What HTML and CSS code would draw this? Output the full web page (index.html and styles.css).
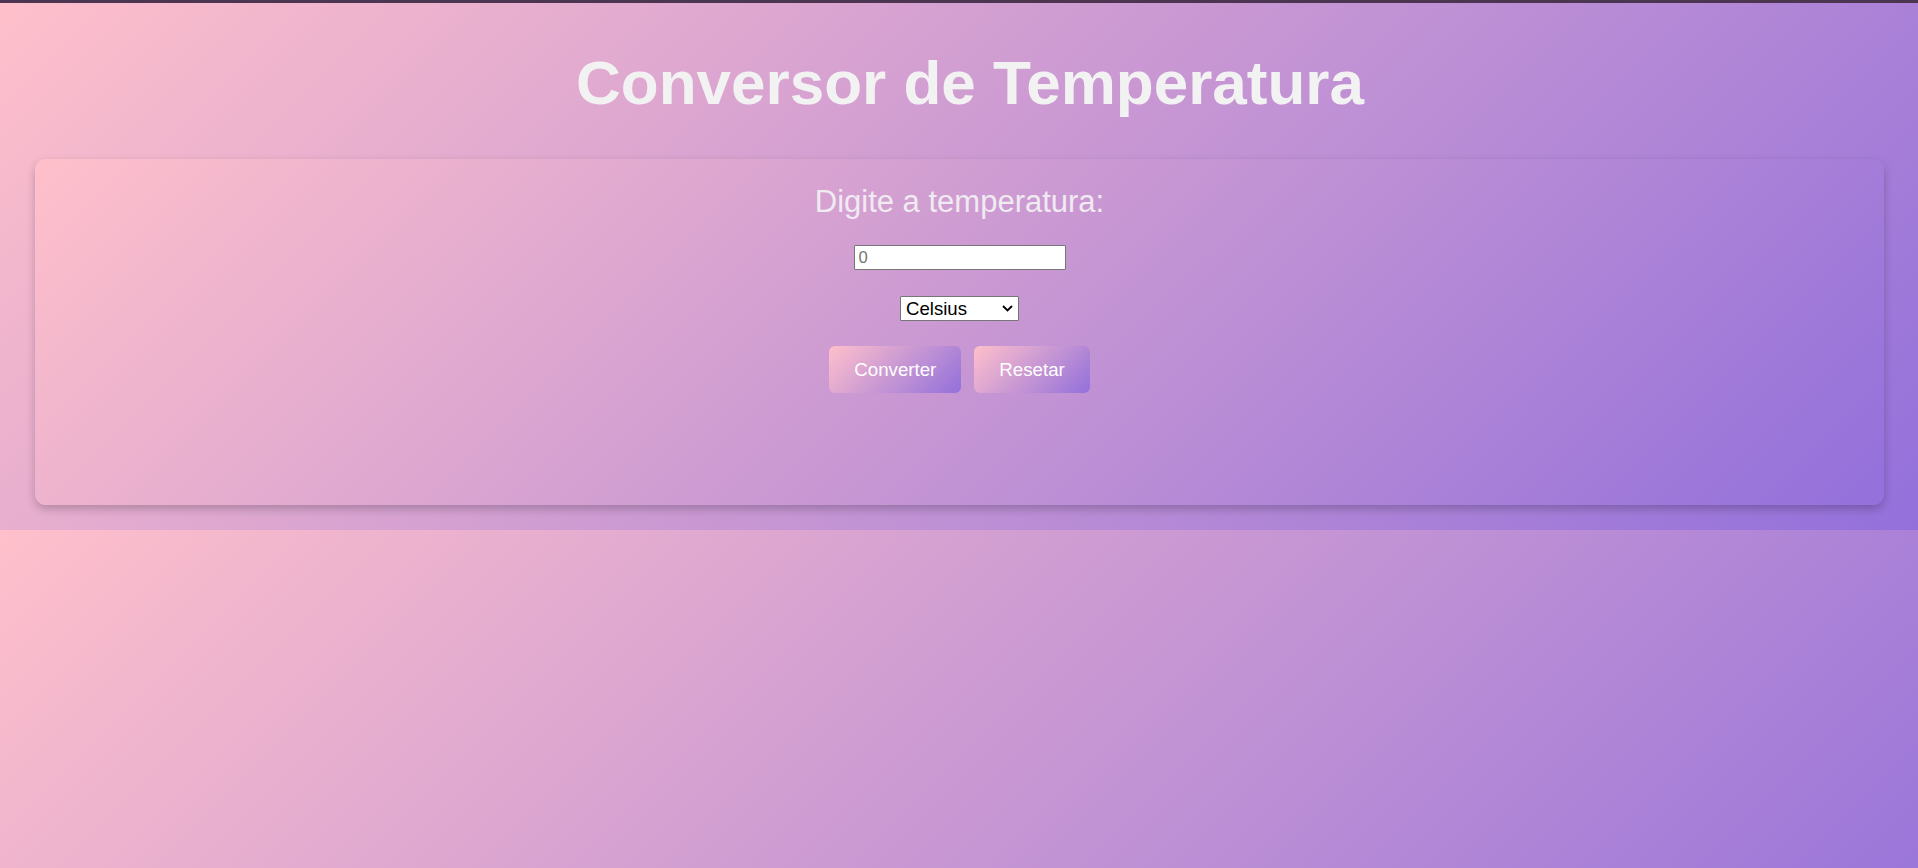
FILE: index.html
```html
<!DOCTYPE html>
<html lang="pt-BR">
<head>
<meta charset="utf-8">
<title>Conversor de Temperatura</title>
<link rel="stylesheet" href="styles.css">
</head>
<body>
<div class="topbar"></div>
<div class="page">
  <h1 class="title">Conversor de Temperatura</h1>
  <div class="card">
    <h2 class="label">Digite a temperatura:</h2>
    <input class="temp-input" type="number" placeholder="0">
    <div class="select-wrap">
      <select class="unit-select">
        <option>Celsius</option>
        <option>Fahrenheit</option>
        <option>Kelvin</option>
      </select>
      <svg class="chevron" width="11" height="7" viewBox="0 0 11 7"><path d="M1 1 L5.5 5.5 L10 1" fill="none" stroke="#000" stroke-width="1.8"/></svg>
    </div>
    <div class="actions">
      <button class="btn">Converter</button>
      <button class="btn">Resetar</button>
    </div>
    <div class="result"></div>
  </div>
</div>
</body>
</html>
```

FILE: styles.css
```css
html {
  background: linear-gradient(135deg, #ffc0cb, #9370db);
  background-size: 100% 530px;
  background-repeat: repeat;
  min-height: 100%;
}

body {
  margin: 0;
  font-family: "Liberation Sans", Arial, sans-serif;
}

.topbar {
  height: 3px;
  background: #4b3550;
}

.page {
  padding: 0 34px 25px 35px;
}

.title {
  margin: 44px 0 41px;
  padding-left: 21px;
  font-size: 62px;
  line-height: 71px;
  font-weight: bold;
  color: #f2f2f2;
  text-align: center;
}

.card {
  display: flex;
  flex-direction: column;
  align-items: center;
  padding: 25px 25px 25px;
  border-radius: 11px;
  background: linear-gradient(135deg, #ffc0cb, #9370db);
  box-shadow: 0 4px 10px rgba(0, 0, 0, 0.22);
}

.label {
  margin: 0;
  font-size: 31px;
  line-height: 36px;
  font-weight: normal;
  color: #f0eaf1;
}

.temp-input {
  box-sizing: border-box;
  width: 212px;
  height: 25px;
  margin-top: 25px;
  padding: 0 4px;
  border: 1px solid #767676;
  border-radius: 1px;
  background: #fff;
  font-family: "Liberation Sans", Arial, sans-serif;
  font-size: 16.7px;
  outline: none;
}

.temp-input::placeholder {
  color: #757575;
}

.select-wrap {
  position: relative;
  margin-top: 26px;
  width: 119px;
  height: 25px;
}

.unit-select {
  box-sizing: border-box;
  width: 119px;
  height: 25px;
  padding: 0 0 0 5px;
  border: 1px solid #767676;
  border-radius: 1px;
  background: #fff;
  color: #000;
  font-family: "Liberation Sans", Arial, sans-serif;
  font-size: 18.6px;
  -webkit-appearance: none;
  appearance: none;
}

.chevron {
  position: absolute;
  right: 6px;
  top: 9px;
  pointer-events: none;
}

.actions {
  display: flex;
  gap: 13px;
  margin-top: 25px;
}

.btn {
  height: 47px;
  padding: 0 25px;
  border: none;
  border-radius: 6px;
  background: linear-gradient(135deg, #ffc0cb, #9370db);
  color: #fff;
  font-family: "Liberation Sans", Arial, sans-serif;
  font-size: 18.7px;
  cursor: pointer;
}

.result {
  height: 87px;
}
```
